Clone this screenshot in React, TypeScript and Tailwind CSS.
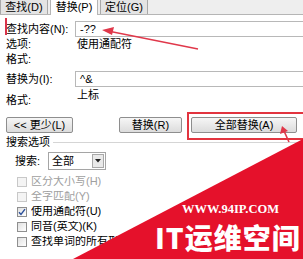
import React from "react";

const font = { fontFamily: '"Liberation Sans", "Noto Sans CJK SC", sans-serif' };

function Tab({ label, active }: { label: string; active?: boolean }) {
  return (
    <div
      className={`w-[48px] flex items-center justify-center text-[11px] leading-none border-r border-t border-l ${
        active ? "bg-white border-[#b5b5b5] -mb-px h-[16px]" : "h-[15px] bg-[#e4e4e4] border-[#a9a9a9]"
      }`}
    >
      {label}
    </div>
  );
}

function Btn({ children, className }: { children: React.ReactNode; className: string }) {
  return (
    <div
      className={`h-[16px] flex items-center justify-center text-[11px] leading-none rounded-[2px] border border-[#8e8e8e] bg-gradient-to-b from-[#f6f6f6] to-[#dcdcdc] ${className}`}
    >
      {children}
    </div>
  );
}

function Check({ label, checked, disabled }: { label: string; checked?: boolean; disabled?: boolean }) {
  return (
    <div className="h-[15px] flex items-center gap-[4px] pl-[17px]">
      <div
        className={`w-[10px] h-[10px] shrink-0 border flex items-center justify-center ${
          disabled ? "border-[#c8c8c8] bg-[#f4f4f4]" : "border-[#8f8f8f] bg-gradient-to-br from-[#e0e0e0] to-white"
        }`}
      >
        {checked && (
          <svg width="8" height="8" viewBox="0 0 8 8">
            <path d="M1 4.2 L3 6.5 L7 1.2" stroke="#2a4f9a" strokeWidth="1.4" fill="none" />
          </svg>
        )}
      </div>
      <span
        className={`max-w-[116px] overflow-hidden text-[11px] leading-none whitespace-nowrap ${
          disabled ? "text-[#a0a0a0]" : "text-black"
        }`}
      >
        {label}
      </span>
    </div>
  );
}

export default function App() {
  return (
    <div className="relative w-[303px] h-[259px] overflow-hidden bg-white text-black" style={font}>
      {/* tab strip */}
      <div className="flex items-end h-[15px] bg-[#eeeeee] border-b border-[#b5b5b5]">
        <Tab label="查找(D)" />
        <div className="w-[2px]" />
        <Tab label="替换(P)" active />
        <div className="w-[2px]" />
        <Tab label="定位(G)" />
      </div>

      <div className="flex flex-col">
        {/* find */}
        <div className="flex items-center h-[16px] mt-[6px]">
          <div className="w-[75px] pl-[6px] text-[11px] leading-none">查找内容(N):</div>
          <div className="flex-1 h-[16px] border border-r-0 border-[#b8b8b8] pl-[4px] flex items-center text-[11px]">-??</div>
        </div>
        <div className="flex items-center h-[15px]">
          <div className="w-[77px] pl-[6px] text-[11px] leading-none">选项:</div>
          <div className="text-[11px] leading-none">使用通配符</div>
        </div>
        <div className="flex items-center h-[15px]">
          <div className="pl-[6px] text-[11px] leading-none">格式:</div>
        </div>

        {/* replace */}
        <div className="flex items-center h-[16px] mt-[4px]">
          <div className="w-[75px] pl-[6px] text-[11px] leading-none">替换为(I):</div>
          <div className="flex-1 h-[16px] border border-r-0 border-[#b8b8b8] pl-[4px] flex items-center text-[11px]">^&amp;</div>
        </div>
        <div className="flex items-start h-[18px] mt-[3px]">
          <div className="w-[77px] pl-[6px] text-[11px] leading-none mt-[5px]">格式:</div>
          <div className="text-[11px] leading-none">上标</div>
        </div>

        {/* buttons */}
        <div className="flex items-center h-[16px] mt-[9px]">
          <Btn className="ml-[6px] w-[67px]">&lt;&lt; 更少(L)</Btn>
          <Btn className="ml-[46px] w-[63px]">替换(R)</Btn>
          <Btn className="ml-[9px] w-[106px]">全部替换(A)</Btn>
        </div>

        {/* options */}
        <div className="flex items-center h-[14px] mt-[2px] pl-[6px] gap-[3px]">
          <span className="text-[11px] leading-none">搜索选项</span>
          <div className="flex-1 h-px bg-[#d5d5d5]" />
        </div>
        <div className="flex items-center h-[18px] mt-[3px] pl-[15px]">
          <span className="w-[33px] text-[11px] leading-none">搜索:</span>
          <div className="w-[58px] h-[18px] border border-[#a5a5a5] flex items-center">
            <span className="flex-1 pl-[3px] text-[11px] leading-none">全部</span>
            <div className="w-[12px] h-[14px] mr-px border border-[#a8a8a8] bg-[#e9e9e9] flex items-center justify-center">
              <svg width="6" height="4" viewBox="0 0 6 4">
                <path d="M0 0 L6 0 L3 3.5 Z" fill="#222" />
              </svg>
            </div>
          </div>
        </div>
        <div className="flex flex-col mt-[4px]">
          <Check label="区分大小写(H)" disabled />
          <Check label="全字匹配(Y)" disabled />
          <Check label="使用通配符(U)" checked />
          <Check label="同音(英文)(K)" />
          <Check label="查找单词的所有形式(英文)(W)" />
        </div>
      </div>

      {/* annotations */}
      <div className="absolute left-[5px] top-[18px] w-[2px] h-[17px] bg-[#d8334a]" />
      <div className="absolute left-[187px] top-[112px] w-[130px] h-[28px] border-2 border-[#e2343f]" />
      <svg className="absolute inset-0" width="303" height="259" viewBox="0 0 303 259">
        <polygon points="73,259 303,139 303,259" fill="#e5112b" />
        <line x1="198" y1="49" x2="108" y2="31" stroke="#e0384a" strokeWidth="1.4" />
        <polygon points="102,30 114,27 112,35" fill="#e0384a" />
        <line x1="289" y1="142" x2="284" y2="131" stroke="#e0384a" strokeWidth="1.6" />
        <polygon points="282,126 280,134 288,131" fill="#e0384a" />
      </svg>
      <div className="absolute left-[182px] top-[203px] text-white text-[12.5px] font-bold leading-none" style={{ fontFamily: '"Liberation Serif", serif' }}>
        WWW.94IP.COM
      </div>
      <div
        className="absolute left-[155px] top-[223px] text-white text-[28px] font-black leading-none tracking-[1px]"
        style={{ fontFamily: '"Noto Sans CJK SC", "Noto Sans", sans-serif' }}
      >
        IT运维空间
      </div>
    </div>
  );
}
